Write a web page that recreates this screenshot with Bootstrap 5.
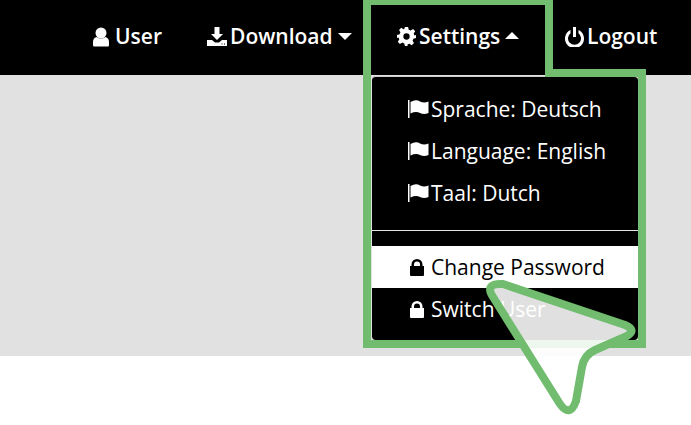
<!DOCTYPE html>
<html lang="en">
<head>
<meta charset="utf-8">
<title>Settings menu</title>
<link rel="stylesheet" href="https://cdn.jsdelivr.net/npm/bootstrap@5.3.0/dist/css/bootstrap.min.css">
<style>
html,body{height:425px;overflow:hidden;background:#fff;font-family:"Open Sans",sans-serif}
.page-wrap{position:relative;width:691px;height:425px}
.top-shade{height:356px;background:#e1e1e1}
.top-bar{height:75px;background:#000;padding:0}
.top-nav{flex-direction:row;margin-left:auto}
.top-link{display:flex;align-items:center;height:75px;padding-bottom:2px;color:#fff;font-size:21px;font-weight:600;text-decoration:none}
.top-link svg{fill:#fff;display:block;flex:none}
.cell-user{width:114px;padding-left:12px}
.cell-down{width:168px;padding-left:12px}
.cell-set{width:190px;padding-left:34px}
.cell-out{width:138px;padding-left:12px}
.gap-a{margin-right:6px}
.gap-b{margin-right:3px}
.car{width:0;height:0;border-left:7px solid transparent;border-right:7px solid transparent;margin-left:5px}
.car-down{border-top:7px solid #fff;margin-top:0}
.car-up{border-bottom:7px solid #fff;margin-top:-2px}
.set-item{position:relative}
.set-menu{position:absolute;display:block;left:9px;top:76px;width:266px;height:264px;margin:0;padding:11px 0 0;background:#000;border:0;border-radius:4px;border-top:1px solid #ccc}
.set-menu .dropdown-item{display:flex;align-items:center;height:42px;padding:0 0 0 36px;color:#fff;font-size:21px;line-height:42px}
.set-menu .dropdown-item svg{fill:currentColor;flex:none}
.set-menu .is-hot{background:#fff;color:#000}
.set-menu .dropdown-divider{margin:16px 0 15px;border-top:1px solid #e5e5e5;opacity:1}
.ann{position:absolute;left:0;top:0;pointer-events:none;z-index:1100}
</style>
</head>
<body>
<div class="page-wrap">
  <div class="top-shade">
    <nav class="navbar top-bar">
      <ul class="nav top-nav">
        <li class="nav-item"><a class="top-link cell-user" href="#"><svg width="16" height="20" viewBox="0 0 16 20" class="gap-a"><circle cx="8" cy="6" r="5.500"/><path d="M1 19.500Q0 19.500 0 18V15Q0 11 3.500 10Q8 13 12.500 10Q16 11 16 15V18Q16 19.500 15 19.500Z"/></svg>User</a></li>
        <li class="nav-item"><a class="top-link cell-down" href="#"><svg width="20" height="20" viewBox="0 0 20 20" class="gap-b"><path d="M7.500 0H12.500V7H16L10 13L4 7H7.500Z"/><path d="M0 13H5L8 15.500H12L15 13H20V19H0ZM14.500 16.500v1h1v-1ZM17 16.500v1h1v-1Z" fill-rule="evenodd"/></svg>Download<span class="car car-down"></span></a></li>
        <li class="nav-item set-item">
          <a class="top-link cell-set" href="#"><svg width="19" height="19" viewBox="0 0 24 24" class="gap-b"><path fill-rule="evenodd" d="M10 0H14L14.800 3.400L17.300 4.400L20.300 2.600L23 5.400L21.100 8.300L22 10.700L24 10V14L20.700 14.800L19.700 17.300L21.400 20.300L18.700 23L15.700 21.100L13.300 22V24H10L9.200 20.700L6.700 19.700L3.700 21.400L1 18.700L2.900 15.700L2 13.300L0 14V10L3.300 9.200L4.300 6.700L2.600 3.700L5.300 1L8.300 2.900L9.200 2.500ZM12 8A4 4 0 1 0 12 16A4 4 0 1 0 12 8Z"/></svg>Settings<span class="car car-up"></span></a>
          <ul class="dropdown-menu set-menu">
            <li><a class="dropdown-item" href="#"><svg width="23" height="18" viewBox="0 0 23 18"><path d="M0 0H1.500V18H0Z"/><path d="M2.500 2Q8 -1 12 1.500Q16 3.500 20.500 1.500V13Q16 15 12 13Q8 11 2.500 13.500Z"/></svg>Sprache: Deutsch</a></li>
            <li><a class="dropdown-item" href="#"><svg width="23" height="18" viewBox="0 0 23 18"><path d="M0 0H1.500V18H0Z"/><path d="M2.500 2Q8 -1 12 1.500Q16 3.500 20.500 1.500V13Q16 15 12 13Q8 11 2.500 13.500Z"/></svg>Language: English</a></li>
            <li><a class="dropdown-item" href="#"><svg width="23" height="18" viewBox="0 0 23 18"><path d="M0 0H1.500V18H0Z"/><path d="M2.500 2Q8 -1 12 1.500Q16 3.500 20.500 1.500V13Q16 15 12 13Q8 11 2.500 13.500Z"/></svg>Taal: Dutch</a></li>
            <li><hr class="dropdown-divider"></li>
            <li><a class="dropdown-item is-hot" href="#"><svg width="23" height="17" viewBox="0 0 23 17"><path fill-rule="evenodd" d="M3.500 7V5.500A5.500 5.500 0 0 1 14.500 5.500V7H16V16Q16 17 15 17H3Q2 17 2 16V7ZM6 7H12V5.500A3 3 0 0 0 6 5.500Z"/></svg>Change Password</a></li>
            <li><a class="dropdown-item" href="#"><svg width="23" height="17" viewBox="0 0 23 17"><path fill-rule="evenodd" d="M3.500 7V5.500A5.500 5.500 0 0 1 14.500 5.500V7H16V16Q16 17 15 17H3Q2 17 2 16V7ZM6 7H12V5.500A3 3 0 0 0 6 5.500Z"/></svg>Switch User</a></li>
          </ul>
        </li>
        <li class="nav-item"><a class="top-link cell-out" href="#"><svg width="19" height="20" viewBox="0 0 19 20" class="gap-b"><path d="M8 0H11V10H8Z"/><path d="M5.500 3V6.200A6.500 6.500 0 1 0 13.500 6.200V3A9.500 9.500 0 1 1 5.500 3Z"/></svg>Logout</a></li>
      </ul>
    </nav>
  </div>
  <svg class="ann" width="691" height="425" viewBox="0 0 691 425">
    <path d="M367 1H549V73H642V344H367Z" fill="none" stroke="#71bc6f" stroke-width="8"/>
    <path d="M503 284L625 325Q637 330 627 336L595 350Q584 355 582 367L576 401Q570 418 560 404L493 297Q484 283 503 284Z" fill="#fff" fill-opacity=".88" stroke="#71bc6f" stroke-width="8"/>
  </svg>
</div>
<script src="https://cdn.jsdelivr.net/npm/bootstrap@5.3.0/dist/js/bootstrap.bundle.min.js"></script>
</body>
</html>
